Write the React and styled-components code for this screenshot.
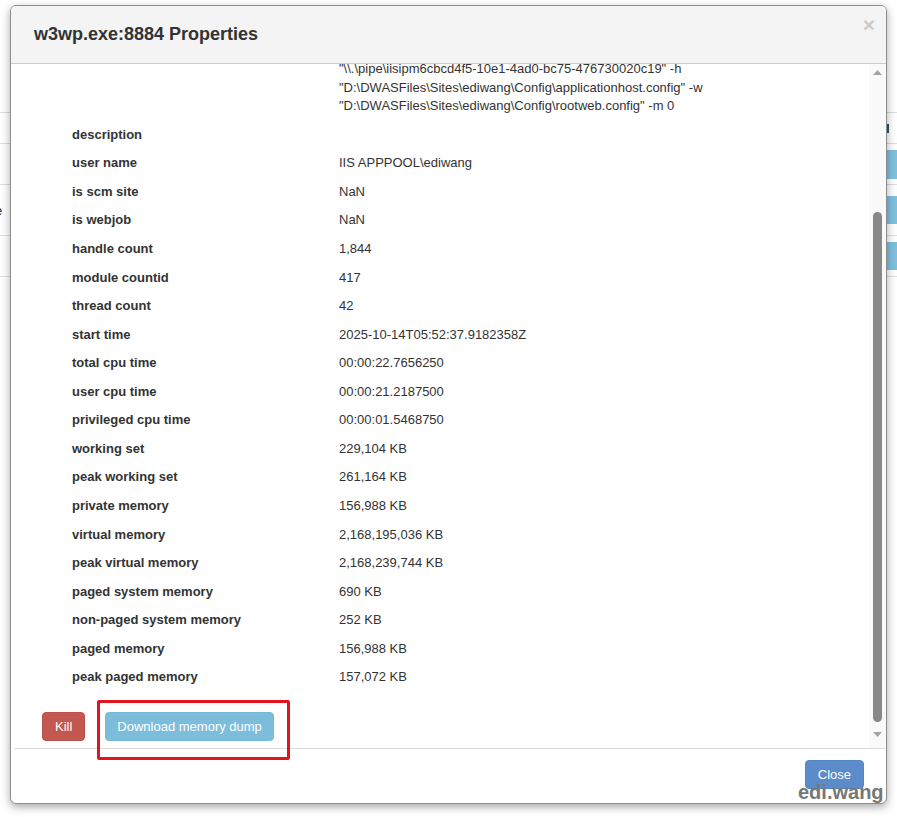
import React from "react";
import styled, { createGlobalStyle } from "styled-components";

const Global = createGlobalStyle`
  html, body { margin: 0; padding: 0; background: #fff; }
  body { font-family: "Liberation Sans", Arial, sans-serif; color: #333; }
  * { box-sizing: border-box; }
`;

const Root = styled.div`
  position: relative;
  width: 897px;
  height: 817px;
  overflow: hidden;
  background: #fff;
`;

/* ---------- page behind the modal ---------- */
const Page = styled.div`
  display: flex;
  flex-direction: column;
  padding-top: 112px;
`;

const PageRow = styled.div`
  display: flex;
  align-items: center;
  justify-content: space-between;
  height: ${(p) => p.$h}px;
  border-top: 1px solid #ddd;
  font-size: 13px;
`;

const PageCell = styled.span`
  margin-left: -5px;
  color: #333;
`;

const PageMark = styled.span`
  width: 2px;
  height: 9px;
  margin-right: 8px;
  background: ${(p) => (p.$show ? "#1d5d68" : "transparent")};
`;

const PageAction = styled.span`
  width: 10px;
  height: ${(p) => p.$bh}px;
  background: #7fc0de;
`;

/* ---------- modal ---------- */
const Dialog = styled.div`
  position: absolute;
  left: 10px;
  top: 5px;
  width: 877px;
  height: 799px;
  border: 1px solid #8e8e8e;
  border-radius: 6px;
  background: #fff;
  box-shadow: 0 3px 9px rgba(0, 0, 0, 0.35);
  display: flex;
  flex-direction: column;
  overflow: hidden;
`;

const Header = styled.div`
  flex: 0 0 58px;
  display: flex;
  align-items: center;
  padding: 0 11px 0 23px;
  background: #f4f4f4;
  border-bottom: 1px solid #ccc;
`;

const Title = styled.h4`
  flex: 1;
  margin: 0;
  font-size: 18px;
  font-weight: bold;
  color: #333;
`;

const CloseX = styled.span`
  align-self: flex-start;
  margin-top: 8px;
  font-size: 21px;
  line-height: 21px;
  font-weight: bold;
  color: #cbcbcb;
`;

const Body = styled.div`
  flex: 0 0 684px;
  display: flex;
  overflow: hidden;
`;

const Content = styled.div`
  flex: 1;
  overflow: hidden;
  padding-left: 61px;
  font-size: 13px;
  line-height: 18.57px;
`;

const Row = styled.div`
  display: grid;
  grid-template-columns: 267px 1fr;
  padding: ${(p) => (p.$clip ? "0 0 5px" : "5px 0")};
  margin-top: ${(p) => (p.$clip ? "-4px" : "0")};
`;

const Label = styled.div`
  font-weight: bold;
  color: #333;
`;

const Value = styled.div`
  color: #333;
  white-space: nowrap;
`;

const Actions = styled.div`
  display: flex;
  gap: 20px;
  margin-top: 20px;
  margin-left: -30px;
`;

const Btn = styled.button`
  height: 29px;
  padding: 0 ${(p) => p.$px || 13}px;
  border-radius: 4px;
  border: 1px solid ${(p) => p.$border};
  background: ${(p) => p.$bg};
  color: #fff;
  font-family: "Liberation Sans", Arial, sans-serif;
  font-size: 13px;
  line-height: 27px;
  cursor: pointer;
`;

const ScrollBar = styled.div`
  flex: 0 0 17px;
  display: flex;
  flex-direction: column;
  background: #f9f9f9;
  padding-bottom: 5px;
`;

const Arrow = styled.svg`
  display: block;
  flex: 0 0 17px;
  width: 17px;
  height: 17px;
`;

const Track = styled.div`
  flex: 1;
  display: flex;
  justify-content: center;
`;

const Thumb = styled.div`
  width: 9px;
  height: 510px;
  margin-top: 131px;
  border-radius: 5px;
  background: #888;
`;

const Footer = styled.div`
  flex: 1;
  display: flex;
  justify-content: flex-end;
  align-items: flex-start;
  padding: 11px 21px 0 0;
  border-top: 1px solid #dcdcdc;
  margin: 0 1px 0 3px;
`;

const Grip = styled.svg`
  position: absolute;
  right: 3px;
  bottom: 3px;
  width: 7px;
  height: 7px;
`;

const Watermark = styled.div`
  position: absolute;
  left: 798px;
  top: 782px;
  font-family: "Liberation Sans", Arial, sans-serif;
  font-size: 20px;
  line-height: 20px;
  font-weight: bold;
  color: #777;
`;

const Annotation = styled.div`
  position: absolute;
  left: 97px;
  top: 700px;
  width: 193px;
  height: 60px;
  border: 3px solid #e5131d;
  border-radius: 2px;
`;

const rows = [
  ["description", ""],
  ["user name", "IIS APPPOOL\\ediwang"],
  ["is scm site", "NaN"],
  ["is webjob", "NaN"],
  ["handle count", "1,844"],
  ["module countid", "417"],
  ["thread count", "42"],
  ["start time", "2025-10-14T05:52:37.9182358Z"],
  ["total cpu time", "00:00:22.7656250"],
  ["user cpu time", "00:00:21.2187500"],
  ["privileged cpu time", "00:00:01.5468750"],
  ["working set", "229,104 KB"],
  ["peak working set", "261,164 KB"],
  ["private memory", "156,988 KB"],
  ["virtual memory", "2,168,195,036 KB"],
  ["peak virtual memory", "2,168,239,744 KB"],
  ["paged system memory", "690 KB"],
  ["non-paged system memory", "252 KB"],
  ["paged memory", "156,988 KB"],
  ["peak paged memory", "157,072 KB"],
];

const pageRows = [
  { h: 31, bh: 0, mark: true },
  { h: 41, bh: 29 },
  { h: 51, bh: 28, text: "e" },
  { h: 41, bh: 28 },
  { h: 1, bh: 0 },
];

export default function App() {
  return (
    <Root>
      <Global />
      <Page>
        {pageRows.map((r, i) => (
          <PageRow key={i} $h={r.h}>
            <PageCell>{r.text || ""}</PageCell>
            {r.bh ? <PageAction $bh={r.bh} /> : <PageMark $show={r.mark} />}
          </PageRow>
        ))}
      </Page>

      <Dialog>
        <Header>
          <Title>w3wp.exe:8884 Properties</Title>
          <CloseX>×</CloseX>
        </Header>
        <Body>
          <Content>
            <Row $clip>
              <Label />
              <Value>
                <div>"\\.\pipe\iisipm6cbcd4f5-10e1-4ad0-bc75-476730020c19" -h</div>
                <div>"D:\DWASFiles\Sites\ediwang\Config\applicationhost.config" -w</div>
                <div>"D:\DWASFiles\Sites\ediwang\Config\rootweb.config" -m 0</div>
              </Value>
            </Row>
            {rows.map(([k, v]) => (
              <Row key={k}>
                <Label>{k}</Label>
                <Value>{v}</Value>
              </Row>
            ))}
            <Actions>
              <Btn $bg="#c2584f" $border="#b9524a" $px={12}>Kill</Btn>
              <Btn $bg="#7dbddc" $border="#78b8d7" $px={11}>Download memory dump</Btn>
            </Actions>
          </Content>
          <ScrollBar>
            <Arrow viewBox="0 0 17 17">
              <polygon points="4,11 13,11 8.5,6" fill="#a3a3a3" />
            </Arrow>
            <Track>
              <Thumb />
            </Track>
            <Arrow viewBox="0 0 17 17">
              <polygon points="4,6 13,6 8.5,11" fill="#a3a3a3" />
            </Arrow>
          </ScrollBar>
        </Body>
        <Footer>
          <Btn $bg="#5b8bc8" $border="#5585c2" $px={12}>Close</Btn>
        </Footer>
        <Grip viewBox="0 0 7 7">
          <line x1="6" y1="1" x2="1" y2="6" stroke="#555" strokeWidth="1" />
          <line x1="6" y1="4" x2="4" y2="6" stroke="#555" strokeWidth="1" />
        </Grip>
      </Dialog>

      <Watermark>edi.wang</Watermark>
      <Annotation />
    </Root>
  );
}
